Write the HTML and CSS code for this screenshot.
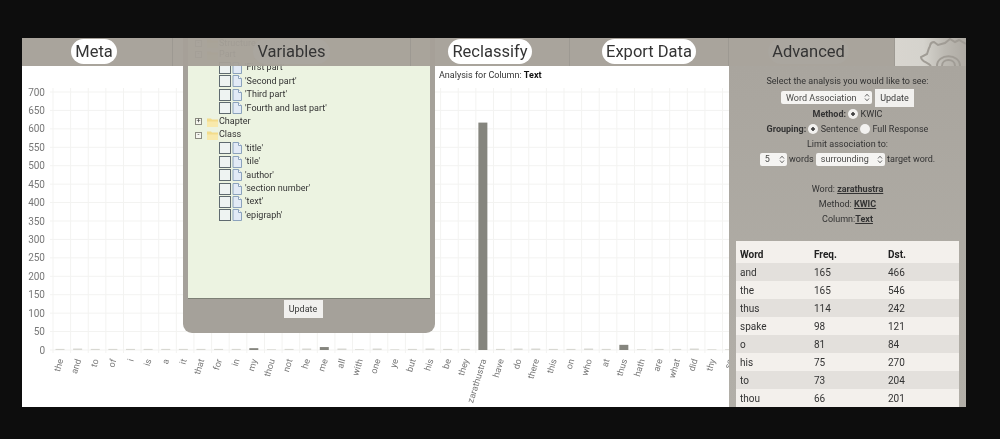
FILE: index.html
```html
<!DOCTYPE html>
<html lang="en">

<head>
  <meta charset="utf-8">
  <title>Word Association</title>
  <link rel="stylesheet" href="styles.css">
</head>

<body>
  <svg class="defs" width="0" height="0">
    <symbol id="i-file" viewBox="0 0 10 12">
      <path d="M1 .5H6.5L9.5 3.5V11.5H1Z" fill="#e2eaf6" stroke="#8ba2bc" />
      <path d="M6.5 .5V3.5H9.5" fill="#fff" stroke="#8ba2bc" />
    </symbol>
    <symbol id="i-folder" viewBox="0 0 11 10">
      <path d="M0 1.5H4L5 2.5H11V10H0Z" fill="#f3dc8b" />
      <path d="M0 4.5H11V10H0Z" fill="#f8e9ac" />
    </symbol>
    <symbol id="i-arrows" viewBox="0 0 6 9">
      <path d="M1 3.5L3 1.2L5 3.5M1 5.5L3 7.8L5 5.5" fill="none" stroke="#666" stroke-width="1" />
    </symbol>
  </svg>

  <div class="app">

    <div class="nav">
      <div class="tab tab-meta"><span class="pill">Meta</span></div>
      <div class="tab tab-variables"><span class="pill pill-active">Variables</span></div>
      <div class="tab tab-reclassify"><span class="pill">Reclassify</span></div>
      <div class="tab tab-export"><span class="pill">Export Data</span></div>
      <div class="tab tab-advanced"><span class="pill pill-active">Advanced</span></div>
      <div class="gear">
        <svg width="71" height="28" viewBox="0 0 71 28">
          <path class="gear-line" d="M36 28 C33 24 26 24 26 19 L32 16 L34 10 C36 8 34 4 39 4 L43 7 L50 5 L55 1 L60 4 L64 2 L71 6" />
          <path class="gear-line" d="M47 28 C47 20 60 20 60 28" />
          <path class="gear-line" d="M42 28 C42 15 65 15 65 28" />
        </svg>
      </div>
    </div>

    <!-- popup sits behind the nav, so its first rows are cut off -->
    <div class="popup">
      <div class="tree">
        <div class="row row-group row-top"><span class="exp">-</span><svg class="folder"><use href="#i-folder" /></svg>Structure</div>
        <div class="row row-group"><span class="exp">-</span><svg class="folder"><use href="#i-folder" /></svg>Part</div>
        <div class="row"><span class="check"></span><svg class="file"><use href="#i-file" /></svg>'First part'</div>
        <div class="row"><span class="check"></span><svg class="file"><use href="#i-file" /></svg>'Second part'</div>
        <div class="row"><span class="check"></span><svg class="file"><use href="#i-file" /></svg>'Third part'</div>
        <div class="row"><span class="check"></span><svg class="file"><use href="#i-file" /></svg>'Fourth and last part'</div>
        <div class="row row-group"><span class="exp">+</span><svg class="folder"><use href="#i-folder" /></svg>Chapter</div>
        <div class="row row-group"><span class="exp">-</span><svg class="folder"><use href="#i-folder" /></svg>Class</div>
        <div class="row"><span class="check"></span><svg class="file"><use href="#i-file" /></svg>'title'</div>
        <div class="row"><span class="check"></span><svg class="file"><use href="#i-file" /></svg>'tile'</div>
        <div class="row"><span class="check"></span><svg class="file"><use href="#i-file" /></svg>'author'</div>
        <div class="row"><span class="check"></span><svg class="file"><use href="#i-file" /></svg>'section number'</div>
        <div class="row"><span class="check"></span><svg class="file"><use href="#i-file" /></svg>'text'</div>
        <div class="row"><span class="check"></span><svg class="file"><use href="#i-file" /></svg>'epigraph'</div>
      </div>
      <div class="popup-foot"><span class="btn">Update</span></div>
    </div>

    <div class="content">
      <div class="chart">
        <div class="chart-title">Analysis for Column: <b>Text</b></div>
        <svg id="plot" class="plot" width="707" height="341"></svg>
      </div>

      <div class="side">
        <div class="form">
          <p class="line-first">Select the analysis you would like to see:</p>
          <p class="line-controls">
            <span class="select select-analysis">Word Association<svg class="arrows"><use href="#i-arrows" /></svg></span>
            <span class="btn">Update</span>
          </p>
          <p class="line"><b>Method:</b> <span class="radio on"></span> KWIC</p>
          <p class="line"><b>Grouping:</b> <span class="radio on"></span> Sentence <span class="radio"></span> Full Response</p>
          <p class="line">Limit association to:</p>
          <p class="line">
            <span class="select select-num">5<svg class="arrows"><use href="#i-arrows" /></svg></span> words
            <span class="select select-where">surrounding<svg class="arrows"><use href="#i-arrows" /></svg></span> target word.
          </p>
        </div>

        <div class="summary">
          <p>Word: <b>zarathustra</b></p>
          <p>Method: <b>KWIC</b></p>
          <p>Column:<b>Text</b></p>
        </div>

        <table class="words">
          <tr><th>Word</th><th>Freq.</th><th>Dst.</th></tr>
          <tr><td>and</td><td>165</td><td>466</td></tr>
          <tr><td>the</td><td>165</td><td>546</td></tr>
          <tr><td>thus</td><td>114</td><td>242</td></tr>
          <tr><td>spake</td><td>98</td><td>121</td></tr>
          <tr><td>o</td><td>81</td><td>84</td></tr>
          <tr><td>his</td><td>75</td><td>270</td></tr>
          <tr><td>to</td><td>73</td><td>204</td></tr>
          <tr><td>thou</td><td>66</td><td>201</td></tr>
        </table>
      </div>
    </div>

  </div>

  <script src="chart.js"></script>
</body>

</html>
```

FILE: styles.css
```css
* {
	box-sizing: border-box;
}

html, body {
	margin: 0;
	height: 439px;
	overflow: hidden;
}

body {
	background: #0d0d0d;
	padding: 38px 34px 32px 22px;
	font-family: Roboto, "Liberation Sans", sans-serif;
	font-size: 9px;
	color: #333;
}

p {
	margin: 0;
}

.defs {
	display: block;
	height: 0;
}

.app {
	position: relative;
	height: 369px;
	display: flex;
	flex-direction: column;
	overflow: hidden;
	background: #fff;
	filter: blur(0.4px);
}

/* nav */
.nav {
	position: relative;
	z-index: 2;
	height: 28px;
	flex: none;
	display: flex;
	background: rgba(165, 160, 152, 0.96);
}

.tab {
	display: flex;
	justify-content: center;
	padding-top: 1px;
	border-right: 1px solid #9d9992;
}

.tab-meta { width: 151px; padding-right: 6px; }
.tab-variables { width: 238px; }
.tab-reclassify { width: 159px; }
.tab-export { width: 159px; }
.tab-advanced { width: 166px; padding-right: 6px; }

.pill {
	height: 25px;
	line-height: 25px;
	padding: 0 4px;
	border-radius: 13px;
	background: #fff;
	font-size: 16.5px;
	color: #343434;
}

.pill-active {
	background: #aaa69f;
}

.gear {
	flex: 1;
	background: linear-gradient(90deg, #d8d5cf 0%, #d5d3cd 40%, #bcb9b2 70%, #aeaaa3 100%);
}

.gear svg {
	display: block;
}

.gear-line {
	fill: none;
	stroke: #a09c95;
	stroke-width: 2;
}

/* popup */
.popup {
	position: absolute;
	z-index: 1;
	left: 161px;
	top: 0;
	width: 252px;
	height: 295px;
	padding: 0 5px;
	background: #a5a19a;
	border-radius: 0 0 9px 9px;
}

.tree {
	height: 261px;
	padding-left: 7px;
	background: #ecf3e1;
	border-bottom: 1px solid #7d8075;
}

.row {
	height: 13.4px;
	line-height: 13.4px;
	display: flex;
	align-items: center;
	padding-left: 24px;
	font-size: 9px;
	white-space: nowrap;
}

.row-group {
	padding-left: 0;
}

.row-top {
	height: 10px;
	line-height: 10px;
}

.exp {
	width: 7px;
	height: 7px;
	margin-right: 5px;
	border: 1px solid #8a8a80;
	font-size: 7px;
	line-height: 5px;
	text-align: center;
	background: #f6f6f0;
}

.folder {
	width: 11px;
	height: 10px;
	margin-right: 1px;
}

.check {
	width: 12px;
	height: 12px;
	margin-right: 1px;
	border: 1px solid #5f6a70;
	background: #eef3f2;
}

.file {
	width: 10px;
	height: 12px;
	margin-right: 3px;
}

.popup-foot {
	display: flex;
	justify-content: center;
	padding: 1px 12px 0 0;
}

.btn {
	display: inline-block;
	width: 39px;
	height: 18px;
	line-height: 18px;
	text-align: center;
	background: #f1f0ee;
	font-size: 9px;
	color: #3a3a3a;
}

/* chart */
.content {
	flex: 1;
	display: flex;
	min-height: 0;
}

.chart {
	position: relative;
	width: 707px;
	background: #fff;
}

.chart-title {
	position: absolute;
	left: 417px;
	top: 4px;
	font-size: 9px;
	color: #333;
}

.chart-title b {
	color: #111;
}

.plot {
	display: block;
}

.grid {
	stroke: #f3f3f1;
	stroke-width: 1;
}

.tick {
	font-size: 10px;
	fill: #777;
	text-anchor: end;
}

.word {
	font-size: 9px;
	fill: #777;
	text-anchor: end;
}

.bar {
	fill: #85857e;
}

.bar-low {
	fill: #d8d8d2;
}

/* side panel */
.side {
	width: 237px;
	padding: 0 7px;
	background: linear-gradient(#a9a59e, #b2afa8);
	text-align: center;
}

.form {
	padding-top: 8px;
}

.line-first {
	height: 14px;
	line-height: 14px;
}

.line-controls {
	display: flex;
	justify-content: center;
	align-items: center;
	gap: 3px;
	height: 19px;
}

.line {
	height: 15px;
	line-height: 15px;
}

.select {
	display: inline-flex;
	align-items: center;
	justify-content: space-between;
	height: 13px;
	padding: 0 2px 0 5px;
	border-radius: 2px;
	background: #f5f4f2;
	font-size: 9px;
	text-align: left;
	vertical-align: middle;
	color: #4a4a48;
}

.select-analysis { width: 91px; }
.select-num { width: 27px; }
.select-where { width: 69px; }

.arrows {
	width: 6px;
	height: 9px;
}

.radio {
	display: inline-block;
	width: 10px;
	height: 10px;
	vertical-align: -2px;
	border-radius: 50%;
	background: #f2f1ef;
}

.radio.on {
	background: radial-gradient(circle, #444 0 1.5px, #f2f1ef 2px);
}

.summary {
	padding-top: 15px;
	line-height: 15px;
}

.summary b {
	text-decoration: underline;
}

.words {
	width: 223px;
	margin-top: 14px;
	border-collapse: collapse;
	table-layout: fixed;
	text-align: left;
	font-size: 10px;
}

.words th, .words td {
	height: 18px;
	padding: 0 0 0 4px;
}

.words th {
	height: 22px;
	padding-top: 4px;
	color: #222;
}

.words th:nth-child(1) { width: 74px; }
.words th:nth-child(2) { width: 74px; }

.words tr:nth-child(odd) {
	background: #f3f0ec;
}

.words tr:nth-child(even) {
	background: #e3e0dc;
}
```

FILE: chart.js
```js
var NS = 'http://www.w3.org/2000/svg'
var plot = document.getElementById('plot')

var LEFT = 31, ZERO = 284, TOP = 26, STEP = 17.62

// word, count
var data = [
	['the', 3], ['and', 4], ['to', 3], ['of', 3], ['i', 3], ['is', 3], ['a', 3], ['it', 3],
	['that', 3], ['for', 3], ['in', 3], ['my', 5], ['thou', 2], ['not', 3], ['he', 4], ['me', 8],
	['all', 4], ['with', 2], ['one', 4], ['ye', 2], ['but', 3], ['his', 4], ['be', 3], ['they', 3],
	['zarathustra', 617], ['have', 3], ['do', 4], ['there', 4], ['this', 3], ['on', 3], ['who', 4],
	['at', 3], ['thus', 14], ['hath', 2], ['are', 3], ['what', 3], ['did', 4], ['thy', 2], ['so', 2]
]

function add(tag, attrs, text) {
	var el = document.createElementNS(NS, tag)
	for (var k in attrs) {
		el.setAttribute(k, attrs[k])
	}
	if (text !== undefined) {
		el.textContent = text
	}
	plot.appendChild(el)
	return el
}

// horizontal grid and y labels
for (var v = 0; v <= 700; v += 50) {
	var y = ZERO - v * (ZERO - TOP) / 700
	add('line', { 'class': 'grid', x1: LEFT - 3, x2: 707, y1: y, y2: y })
	add('text', { 'class': 'tick', x: LEFT - 8, y: y + 3.5 }, v)
}

// vertical grid, bars, rotated words
for (var i = 0; i <= data.length; i++) {
	var x = LEFT + i * STEP
	add('line', { 'class': 'grid', x1: x, x2: x, y1: TOP - 4, y2: ZERO + 3 })
	if (i == data.length) {
		break
	}
	var h = data[i][1] * (ZERO - TOP) / 700
	var big = data[i][1] >= 5
	add('rect', {
		'class': big ? 'bar' : 'bar-low',
		x: x + 2.5,
		y: ZERO - h,
		width: 9,
		height: h
	})
	var cx = x + 10.5
	add('text', {
		'class': 'word',
		x: cx,
		y: ZERO + 10,
		transform: 'rotate(-73 ' + cx + ' ' + (ZERO + 10) + ')'
	}, data[i][0])
}
```
